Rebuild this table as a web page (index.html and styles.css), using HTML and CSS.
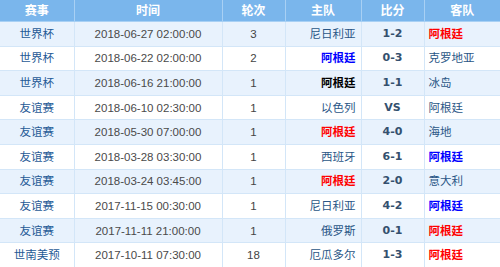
FILE: index.html
```html
<!DOCTYPE html>
<html lang="zh-CN">
<head>
<meta charset="utf-8">
<title>阿根廷 赛程</title>
<link rel="stylesheet" href="styles.css">
</head>
<body>
<table class="matches">
  <colgroup>
    <col class="c-comp"><col class="c-time"><col class="c-round"><col class="c-home"><col class="c-score"><col class="c-away">
  </colgroup>
  <thead>
    <tr><th>赛事</th><th>时间</th><th>轮次</th><th>主队</th><th>比分</th><th>客队</th></tr>
  </thead>
  <tbody>
    <tr class="alt"><td class="comp">世界杯</td><td class="time">2018-06-27 02:00:00</td><td class="round">3</td><td class="home">尼日利亚</td><td class="score">1-2</td><td class="away"><b class="red">阿根廷</b></td></tr>
    <tr><td class="comp">世界杯</td><td class="time">2018-06-22 02:00:00</td><td class="round">2</td><td class="home"><b class="blue">阿根廷</b></td><td class="score">0-3</td><td class="away">克罗地亚</td></tr>
    <tr class="alt"><td class="comp">世界杯</td><td class="time">2018-06-16 21:00:00</td><td class="round">1</td><td class="home"><b class="black">阿根廷</b></td><td class="score">1-1</td><td class="away">冰岛</td></tr>
    <tr><td class="comp">友谊赛</td><td class="time">2018-06-10 02:30:00</td><td class="round">1</td><td class="home">以色列</td><td class="score">VS</td><td class="away">阿根廷</td></tr>
    <tr class="alt"><td class="comp">友谊赛</td><td class="time">2018-05-30 07:00:00</td><td class="round">1</td><td class="home"><b class="red">阿根廷</b></td><td class="score">4-0</td><td class="away">海地</td></tr>
    <tr><td class="comp">友谊赛</td><td class="time">2018-03-28 03:30:00</td><td class="round">1</td><td class="home">西班牙</td><td class="score">6-1</td><td class="away"><b class="blue">阿根廷</b></td></tr>
    <tr class="alt"><td class="comp">友谊赛</td><td class="time">2018-03-24 03:45:00</td><td class="round">1</td><td class="home"><b class="red">阿根廷</b></td><td class="score">2-0</td><td class="away">意大利</td></tr>
    <tr><td class="comp">友谊赛</td><td class="time">2017-11-15 00:30:00</td><td class="round">1</td><td class="home">尼日利亚</td><td class="score">4-2</td><td class="away"><b class="blue">阿根廷</b></td></tr>
    <tr class="alt"><td class="comp">友谊赛</td><td class="time">2017-11-11 21:00:00</td><td class="round">1</td><td class="home">俄罗斯</td><td class="score">0-1</td><td class="away"><b class="red">阿根廷</b></td></tr>
    <tr><td class="comp">世南美预</td><td class="time">2017-10-11 07:30:00</td><td class="round">18</td><td class="home">厄瓜多尔</td><td class="score">1-3</td><td class="away"><b class="red">阿根廷</b></td></tr>
  </tbody>
</table>
</body>
</html>
```
FILE: styles.css
```css
html, body {
  margin: 0;
  padding: 0;
  background: #ffffff;
}
body {
  font-family: "Liberation Sans", "Noto Sans CJK SC", sans-serif;
  font-size: 11.5px;
  color: #444444;
}
.matches {
  width: 500px;
  border-collapse: collapse;
  table-layout: fixed;
}
.c-comp { width: 74px; }
.c-time { width: 148px; }
.c-round { width: 63px; }
.c-home { width: 76px; }
.c-score { width: 63px; }
.c-away { width: 76px; }

.matches th {
  height: 21px;
  padding: 0;
  background: #7ab6ec;
  color: #ffffff;
  font-weight: bold;
  font-size: 12px;
  line-height: 14px;
  text-align: center;
  border-left: 1px solid #a8d0f4;
  border-bottom: 1px solid #a8d0f4;
}
.matches th:first-child { border-left: none; }

.matches td {
  height: 23.6px;
  padding: 0;
  line-height: 14px;
  border-left: 1px solid #d3e6f8;
  border-bottom: 1px solid #d3e6f8;
  text-align: center;
  white-space: nowrap;
}
.matches td:first-child { border-left: none; }
.matches tr.alt td { background: #e8f2fd; }

.comp { color: #1f5a96; }
.time { color: #4a4a4a; }
.round { color: #444444; }
.matches td.home { text-align: right; padding-right: 5px; color: #2a5686; }
.matches td.away { text-align: left; padding-left: 4px; color: #2a5686; }
.score {
  font-family: "DejaVu Sans", sans-serif;
  font-weight: bold;
  font-size: 11px;
  color: #34506e;
}
.red { color: #ff0000; }
.blue { color: #0000ff; }
.black { color: #000000; }
b { font-weight: bold; }
```
